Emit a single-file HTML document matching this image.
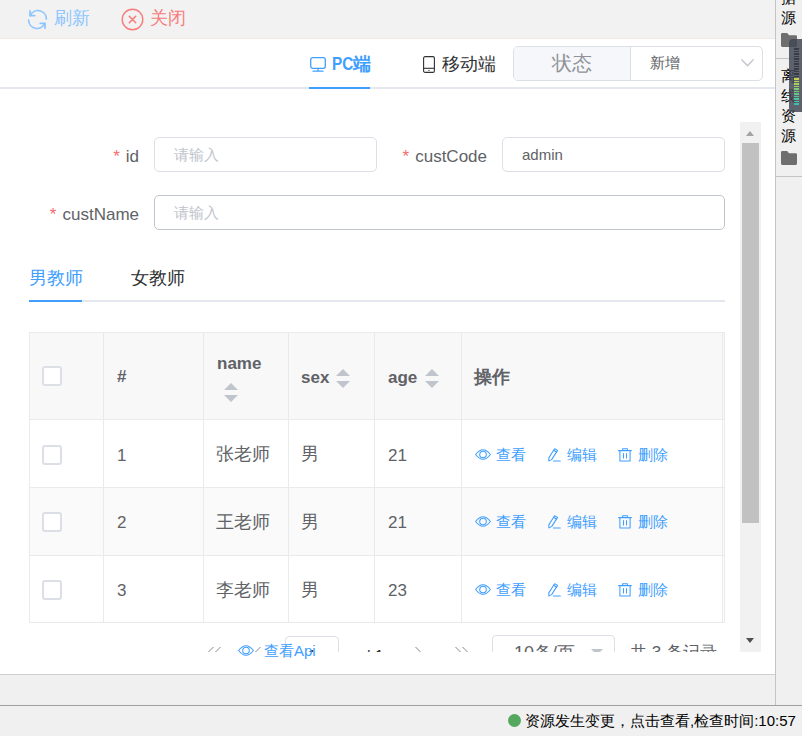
<!DOCTYPE html>
<html lang="zh">
<head>
<meta charset="utf-8">
<title>page</title>
<style>
*{box-sizing:border-box;margin:0;padding:0}
html,body{width:802px;height:736px;overflow:hidden;background:#f0f0f0;font-family:"Liberation Sans",sans-serif;color:#606266}
svg{position:absolute;overflow:visible}
#topbar{position:absolute;left:0;top:0;width:775px;height:39px;background:#f2f2f2;border-bottom:1px solid #f2e8e6}
#topbar .btn{position:absolute;top:0;height:38px;line-height:37px;font-size:18px;white-space:nowrap}
#bar2{position:absolute;left:0;top:39px;width:775px;height:50px;background:#fff;border-bottom:2px solid #e4e7ed}
#main{position:absolute;left:0;top:89px;width:775px;height:585px;background:#fff}
#clip{position:absolute;left:0;top:0;width:740px;height:563px;overflow:hidden}
#gap{position:absolute;left:0;top:674px;width:775px;height:31px;background:#f0f0f0;border-top:1px solid #cfcfcf}
#status{position:absolute;left:0;top:705px;width:802px;height:31px;background:#f0f0f0;border-top:1px solid #a0a0a0}
#side{position:absolute;left:775px;top:0;width:27px;height:705px;background:#f0f0f0;border-left:1px solid #c4c4c4}
.tab2{position:absolute;top:0;height:50px;line-height:51px;font-size:18px;white-space:nowrap}
.lbl{position:absolute;font-size:17px;color:#606266;text-align:right;white-space:nowrap;height:35px;line-height:39px}
.lbl i{color:#f56c6c;font-style:normal;margin-right:6px}
.inp{position:absolute;height:35px;border:1px solid #dcdfe6;border-radius:5px;background:#fff;font-size:15px;line-height:33px;padding-left:19px;color:#606266;white-space:nowrap}
.ph{color:#c0c4cc}
.t{position:absolute;white-space:nowrap}
</style>
</head>
<body>
<div id="topbar">
<svg style="left:27px;top:9px" width="21" height="21" viewBox="0 0 21 21" fill="none" stroke="#8cc5ff" stroke-width="1.7" stroke-linecap="round" stroke-linejoin="round">
<path d="M3.3 6.6A8.4 8.4 0 0 1 19.4 10"/><path d="M3 1.8V6.6H7.8"/>
<path d="M17.7 14.4A8.4 8.4 0 0 1 1.6 11"/><path d="M13.2 14.4H18V19.2"/></svg>
<svg style="left:121px;top:8px" width="23" height="23" viewBox="0 0 23 23" fill="none" stroke="#f97c7c" stroke-width="1.4" stroke-linecap="round">
<circle cx="11.5" cy="11.5" r="10.3"/><path d="M8.3 8.3L14.7 14.7M14.7 8.3L8.3 14.7" stroke-width="1.6"/></svg>
  <div class="btn" style="left:54px;color:#8cc5ff">刷新</div>
  <div class="btn" style="left:150px;color:#f97c7c">关闭</div>
</div>
<div id="bar2">
<svg style="left:310px;top:18px" width="16" height="15" viewBox="0 0 16 15" fill="none" stroke="#409eff" stroke-width="1.3">
<rect x="0.7" y="0.7" width="14.6" height="10.6" rx="2"/><path d="M8 11.3V14M3 14.2H13" stroke-linecap="round" stroke-width="1.2"/></svg>
<svg style="left:423px;top:17px" width="12" height="17" viewBox="0 0 12 17" fill="none" stroke="#303133" stroke-width="1.1">
<rect x="0.6" y="0.6" width="10.8" height="15.8" rx="1.5"/><path d="M0.6 12.3H11.4"/><circle cx="6" cy="14.4" r="0.6" fill="#303133" stroke="none"/></svg>
  <div class="tab2" style="left:331.5px;color:#409eff;font-weight:bold"><span style="display:inline-block;transform:scaleX(0.85);transform-origin:0 50%;margin-right:-3.8px">PC</span>端</div>
  <div class="tab2" style="left:442px;color:#303133">移动端</div>
  <div style="position:absolute;left:309px;top:48px;width:61px;height:2px;background:#409eff"></div>
  <div style="position:absolute;left:513px;top:7px;width:250px;height:35px;border:1px solid #dcdfe6;border-radius:5px;background:#fff;overflow:hidden">
    <div style="position:absolute;left:0;top:0;width:117px;height:33px;background:#f5f7fa;border-right:1px solid #dcdfe6;color:#909399;font-size:20px;line-height:33px;text-align:center">状态</div>
    <div style="position:absolute;left:136px;top:0;height:33px;line-height:32px;font-size:15px;color:#606266">新增</div>
    <svg style="left:227px;top:12px" width="13" height="8" viewBox="0 0 13 8" fill="none" stroke="#c0c4cc" stroke-width="1.3" stroke-linecap="round" stroke-linejoin="round"><path d="M0.8 0.8L6.5 6.8L12.2 0.8"/></svg>
  </div>
</div>
<div id="main">
 <div id="clip">
<div class="lbl" style="left:29px;top:48px;width:110px"><i>*</i>id</div>
<div class="inp" style="left:154px;top:48px;width:223px"><span class="ph">请输入</span></div>
<div class="lbl" style="left:377px;top:48px;width:110px"><i>*</i>custCode</div>
<div class="inp" style="left:502px;top:48px;width:223px">admin</div>
<div class="lbl" style="left:29px;top:106px;width:110px"><i>*</i>custName</div>
<div class="inp" style="left:154px;top:106px;width:571px;border-color:#c0c4cc"><span class="ph">请输入</span></div>
<div class="t" style="left:29px;top:174px;height:30px;line-height:30px;font-size:18px;color:#409eff">男教师</div>
<div class="t" style="left:131px;top:174px;height:30px;line-height:30px;font-size:18px;color:#303133">女教师</div>
<div style="position:absolute;left:29px;top:211px;width:696px;height:2px;background:#e4e7ed"></div>
<div style="position:absolute;left:29px;top:211px;width:53px;height:2px;background:#409eff"></div>
<div id="tbl" style="position:absolute;left:29px;top:243px;width:696px;height:291px;background:#fff">
<div style="position:absolute;left:0;top:0;width:696px;height:87px;background:#f8f8f9"></div>
<div style="position:absolute;left:0;top:155px;width:696px;height:68px;background:#fafafa"></div>
<div style="position:absolute;left:0;top:0px;width:696px;height:1px;background:#e8eaec"></div>
<div style="position:absolute;left:0;top:87px;width:696px;height:1px;background:#e8eaec"></div>
<div style="position:absolute;left:0;top:155px;width:696px;height:1px;background:#e8eaec"></div>
<div style="position:absolute;left:0;top:222.5px;width:696px;height:1px;background:#e8eaec"></div>
<div style="position:absolute;left:0;top:290px;width:696px;height:1px;background:#e8eaec"></div>
<div style="position:absolute;left:0px;top:0;width:1px;height:291px;background:#e8eaec"></div>
<div style="position:absolute;left:74px;top:0;width:1px;height:291px;background:#e8eaec"></div>
<div style="position:absolute;left:174px;top:0;width:1px;height:291px;background:#e8eaec"></div>
<div style="position:absolute;left:259px;top:0;width:1px;height:291px;background:#e8eaec"></div>
<div style="position:absolute;left:345px;top:0;width:1px;height:291px;background:#e8eaec"></div>
<div style="position:absolute;left:432px;top:0;width:1px;height:291px;background:#e8eaec"></div>
<div style="position:absolute;left:693px;top:0;width:1px;height:291px;background:#e8eaec"></div>
<div style="position:absolute;left:695px;top:0;width:1px;height:291px;background:#e8eaec"></div>
<div style="position:absolute;left:13px;top:34.0px;width:20px;height:20px;border:2px solid #dcdfe6;border-radius:3px;background:#fff"></div>
<div style="position:absolute;left:13px;top:112.5px;width:20px;height:20px;border:2px solid #dcdfe6;border-radius:3px;background:#fff"></div>
<div style="position:absolute;left:13px;top:180.0px;width:20px;height:20px;border:2px solid #dcdfe6;border-radius:3px;background:#fff"></div>
<div style="position:absolute;left:13px;top:248.0px;width:20px;height:20px;border:2px solid #dcdfe6;border-radius:3px;background:#fff"></div>
<div class="t" style="left:88px;top:32.5px;height:24px;line-height:24px;font-size:17px;font-weight:bold;color:#606266;">#</div>
<div class="t" style="left:188px;top:19.5px;height:24px;line-height:24px;font-size:17px;font-weight:bold;color:#606266;">name</div>
<div class="t" style="left:272px;top:33.5px;height:24px;line-height:24px;font-size:17px;font-weight:bold;color:#606266;">sex</div>
<div class="t" style="left:359px;top:33.5px;height:24px;line-height:24px;font-size:17px;font-weight:bold;color:#606266;">age</div>
<div class="t" style="left:445px;top:33px;height:24px;line-height:24px;font-size:17px;font-weight:bold;color:#606266;font-size:18px">操作</div>
<div style="position:absolute;left:195px;top:51.0px;width:0;height:0;border-left:7px solid transparent;border-right:7px solid transparent;border-bottom:7px solid #c0c4cc"></div>
<div style="position:absolute;left:195px;top:62.5px;width:0;height:0;border-left:7px solid transparent;border-right:7px solid transparent;border-top:7px solid #c0c4cc"></div>
<div style="position:absolute;left:307px;top:37.0px;width:0;height:0;border-left:7px solid transparent;border-right:7px solid transparent;border-bottom:7px solid #c0c4cc"></div>
<div style="position:absolute;left:307px;top:48.5px;width:0;height:0;border-left:7px solid transparent;border-right:7px solid transparent;border-top:7px solid #c0c4cc"></div>
<div style="position:absolute;left:396px;top:37.0px;width:0;height:0;border-left:7px solid transparent;border-right:7px solid transparent;border-bottom:7px solid #c0c4cc"></div>
<div style="position:absolute;left:396px;top:48.5px;width:0;height:0;border-left:7px solid transparent;border-right:7px solid transparent;border-top:7px solid #c0c4cc"></div>
<div class="t" style="left:88px;top:111.5px;height:24px;line-height:24px;font-size:17px;color:#606266">1</div>
<div class="t" style="left:187px;top:110px;height:24px;line-height:24px;font-size:18px;color:#606266">张老师</div>
<div class="t" style="left:272px;top:110px;height:24px;line-height:24px;font-size:18px;color:#606266">男</div>
<div class="t" style="left:359px;top:111.5px;height:24px;line-height:24px;font-size:17px;color:#606266">21</div>
<div class="t" style="left:467px;top:111px;height:24px;line-height:24px;font-size:15px;color:#409eff">查看</div>
<div class="t" style="left:538px;top:111px;height:24px;line-height:24px;font-size:15px;color:#409eff">编辑</div>
<div class="t" style="left:609px;top:111px;height:24px;line-height:24px;font-size:15px;color:#409eff">删除</div>
<div class="t" style="left:88px;top:179px;height:24px;line-height:24px;font-size:17px;color:#606266">2</div>
<div class="t" style="left:187px;top:177.5px;height:24px;line-height:24px;font-size:18px;color:#606266">王老师</div>
<div class="t" style="left:272px;top:177.5px;height:24px;line-height:24px;font-size:18px;color:#606266">男</div>
<div class="t" style="left:359px;top:179px;height:24px;line-height:24px;font-size:17px;color:#606266">21</div>
<div class="t" style="left:467px;top:178px;height:24px;line-height:24px;font-size:15px;color:#409eff">查看</div>
<div class="t" style="left:538px;top:178px;height:24px;line-height:24px;font-size:15px;color:#409eff">编辑</div>
<div class="t" style="left:609px;top:178px;height:24px;line-height:24px;font-size:15px;color:#409eff">删除</div>
<div class="t" style="left:88px;top:247px;height:24px;line-height:24px;font-size:17px;color:#606266">3</div>
<div class="t" style="left:187px;top:245.5px;height:24px;line-height:24px;font-size:18px;color:#606266">李老师</div>
<div class="t" style="left:272px;top:245.5px;height:24px;line-height:24px;font-size:18px;color:#606266">男</div>
<div class="t" style="left:359px;top:247px;height:24px;line-height:24px;font-size:17px;color:#606266">23</div>
<div class="t" style="left:467px;top:246px;height:24px;line-height:24px;font-size:15px;color:#409eff">查看</div>
<div class="t" style="left:538px;top:246px;height:24px;line-height:24px;font-size:15px;color:#409eff">编辑</div>
<div class="t" style="left:609px;top:246px;height:24px;line-height:24px;font-size:15px;color:#409eff">删除</div>
<svg style="left:446px;top:116.8px" width="16" height="11" viewBox="0 0 16 11" fill="none" stroke="#409eff" stroke-width="1.05"><path d="M0.6 5.5Q8 -4 15.4 5.5Q8 15 0.6 5.5Z" stroke-linejoin="round"/><circle cx="8" cy="5.5" r="3.3"/></svg><svg style="left:518.5px;top:115.5px" width="13" height="14" viewBox="0 0 13 14" fill="none" stroke="#409eff" stroke-width="1.05" stroke-linejoin="round" stroke-linecap="round"><path d="M6.6 0.7L9.6 2.4L3.6 11.6L0.9 12.9L0.8 9.9Z"/><path d="M5.6 2.3L8.5 4M5.5 13H12.3"/></svg><svg style="left:589px;top:115.5px" width="14" height="14" viewBox="0 0 14 14" fill="none" stroke="#409eff" stroke-width="1.05" stroke-linecap="round" stroke-linejoin="round"><path d="M0.6 2.6H13.4M4.6 2.4V0.8H9.4V2.4M1.9 2.8V13H12.1V2.8M5.5 5.5V10M8.5 5.5V10"/></svg><svg style="left:446px;top:184.3px" width="16" height="11" viewBox="0 0 16 11" fill="none" stroke="#409eff" stroke-width="1.05"><path d="M0.6 5.5Q8 -4 15.4 5.5Q8 15 0.6 5.5Z" stroke-linejoin="round"/><circle cx="8" cy="5.5" r="3.3"/></svg><svg style="left:518.5px;top:183.0px" width="13" height="14" viewBox="0 0 13 14" fill="none" stroke="#409eff" stroke-width="1.05" stroke-linejoin="round" stroke-linecap="round"><path d="M6.6 0.7L9.6 2.4L3.6 11.6L0.9 12.9L0.8 9.9Z"/><path d="M5.6 2.3L8.5 4M5.5 13H12.3"/></svg><svg style="left:589px;top:183.0px" width="14" height="14" viewBox="0 0 14 14" fill="none" stroke="#409eff" stroke-width="1.05" stroke-linecap="round" stroke-linejoin="round"><path d="M0.6 2.6H13.4M4.6 2.4V0.8H9.4V2.4M1.9 2.8V13H12.1V2.8M5.5 5.5V10M8.5 5.5V10"/></svg><svg style="left:446px;top:252.3px" width="16" height="11" viewBox="0 0 16 11" fill="none" stroke="#409eff" stroke-width="1.05"><path d="M0.6 5.5Q8 -4 15.4 5.5Q8 15 0.6 5.5Z" stroke-linejoin="round"/><circle cx="8" cy="5.5" r="3.3"/></svg><svg style="left:518.5px;top:251.0px" width="13" height="14" viewBox="0 0 13 14" fill="none" stroke="#409eff" stroke-width="1.05" stroke-linejoin="round" stroke-linecap="round"><path d="M6.6 0.7L9.6 2.4L3.6 11.6L0.9 12.9L0.8 9.9Z"/><path d="M5.6 2.3L8.5 4M5.5 13H12.3"/></svg><svg style="left:589px;top:251.0px" width="14" height="14" viewBox="0 0 14 14" fill="none" stroke="#409eff" stroke-width="1.05" stroke-linecap="round" stroke-linejoin="round"><path d="M0.6 2.6H13.4M4.6 2.4V0.8H9.4V2.4M1.9 2.8V13H12.1V2.8M5.5 5.5V10M8.5 5.5V10"/></svg></div>
<div style="position:absolute;left:285px;top:547px;width:54px;height:34px;border:1px solid #dcdfe6;border-radius:4px;background:#fff"></div>
<div style="position:absolute;left:492px;top:546px;width:123px;height:34px;border:1px solid #dcdfe6;border-radius:4px;background:#fff"></div>
<div class="t" style="left:514px;top:547px;height:34px;line-height:34px;font-size:18px;color:#606266">10条/页</div>
<div class="t" style="left:630px;top:547px;height:34px;line-height:34px;font-size:17px;color:#606266">共 3 条记录</div>
<svg style="left:0;top:557px" width="740" height="20" viewBox="0 0 740 20" fill="none" stroke="#85878b" stroke-width="1" stroke-linecap="butt">
<path d="M206.5 8L213.5 1M213.5 8L220.5 1M253.5 8L260.5 1M415.5 1L422.5 8M455.5 1L462.5 8M462.5 1L469.5 8"/>
<path d="M591 3H603L597 9Z" fill="#c0c4cc" stroke="none"/></svg>
<div class="t" style="left:365px;top:551px;height:34px;line-height:34px;font-size:17px;color:#303133">/ 1</div><div class="t" style="left:285px;top:551px;width:54px;text-align:center;height:34px;line-height:34px;font-size:17px;color:#303133">1</div>
 </div>
<svg style="left:238px;top:556px" width="16" height="11" viewBox="0 0 16 11" fill="none" stroke="#409eff" stroke-width="1.05"><path d="M0.6 5.5Q8 -4 15.4 5.5Q8 15 0.6 5.5Z" stroke-linejoin="round"/><circle cx="8" cy="5.5" r="3.3"/></svg><div class="t" style="left:264px;top:551px;height:22px;line-height:22px;font-size:15px;color:#409eff;background:transparent">查看Api</div>
</div>

<div id="sb" style="position:absolute;left:740px;top:122px;width:21px;height:530px;background:#f1f1f1">
  <div style="position:absolute;left:2px;top:21px;width:17px;height:380px;background:#c1c1c1"></div>
  <div style="position:absolute;left:6px;top:9px;width:0;height:0;border-left:4.5px solid transparent;border-right:4.5px solid transparent;border-bottom:5px solid #a3a3a3"></div>
  <div style="position:absolute;left:6px;top:516px;width:0;height:0;border-left:4.5px solid transparent;border-right:4.5px solid transparent;border-top:5px solid #505050"></div>
</div>
<div id="gap"></div>
<div id="side"><div class="t" style="left:4.5px;top:-12px;width:15px;height:20px;line-height:20px;font-size:15px;color:#000">据</div><div class="t" style="left:4.5px;top:8px;width:15px;height:20px;line-height:20px;font-size:15px;color:#000">源</div><svg style="left:4.5px;top:33px" width="16" height="14" viewBox="0 0 16 14"><path d="M1.2 0H6.2L8 2.2H14.8Q16 2.2 16 3.4V12.6Q16 14 14.8 14H1.2Q0 14 0 12.6V1.2Q0 0 1.2 0Z" fill="#6e6e6e"/></svg><div style="position:absolute;left:0;top:58px;width:27px;height:1px;background:#c4c4c4"></div><div class="t" style="left:4.5px;top:66px;width:15px;height:20px;line-height:20px;font-size:15px;color:#000">离</div><div class="t" style="left:4.5px;top:86px;width:15px;height:20px;line-height:20px;font-size:15px;color:#000">线</div><div class="t" style="left:4.5px;top:106px;width:15px;height:20px;line-height:20px;font-size:15px;color:#000">资</div><div class="t" style="left:4.5px;top:126px;width:15px;height:20px;line-height:20px;font-size:15px;color:#000">源</div><svg style="left:4.5px;top:151px" width="16" height="14" viewBox="0 0 16 14"><path d="M1.2 0H6.2L8 2.2H14.8Q16 2.2 16 3.4V12.6Q16 14 14.8 14H1.2Q0 14 0 12.6V1.2Q0 0 1.2 0Z" fill="#6e6e6e"/></svg><div style="position:absolute;left:0;top:176px;width:27px;height:1px;background:#c4c4c4"></div><div style="position:absolute;left:13px;top:39px;width:14px;height:73px;background:rgba(66,70,84,0.84);border-radius:4px 0 0 4px;overflow:hidden"><div style="position:absolute;left:5px;top:9.2px;width:5.4px;height:1.5px;background:#383b46"></div><div style="position:absolute;left:5px;top:11.7px;width:5.4px;height:1.5px;background:#383b46"></div><div style="position:absolute;left:5px;top:14.2px;width:5.4px;height:1.5px;background:#383b46"></div><div style="position:absolute;left:5px;top:16.7px;width:5.4px;height:1.5px;background:#383b46"></div><div style="position:absolute;left:5px;top:19.2px;width:5.4px;height:1.5px;background:#383b46"></div><div style="position:absolute;left:5px;top:21.7px;width:5.4px;height:1.5px;background:#383b46"></div><div style="position:absolute;left:5px;top:24.2px;width:5.4px;height:1.5px;background:#383b46"></div><div style="position:absolute;left:5px;top:26.7px;width:5.4px;height:1.5px;background:#383b46"></div><div style="position:absolute;left:5px;top:29.2px;width:5.4px;height:1.5px;background:#383b46"></div><div style="position:absolute;left:5px;top:31.7px;width:5.4px;height:1.5px;background:#383b46"></div><div style="position:absolute;left:5px;top:34.2px;width:5.4px;height:1.5px;background:#383b46"></div><div style="position:absolute;left:5px;top:36.7px;width:5.4px;height:1.5px;background:#383b46"></div><div style="position:absolute;left:5px;top:39.2px;width:5.4px;height:1.5px;background:#c9d24e"></div><div style="position:absolute;left:5px;top:41.7px;width:5.4px;height:1.5px;background:#b9d052"></div><div style="position:absolute;left:5px;top:44.2px;width:5.4px;height:1.5px;background:#a6cf5a"></div><div style="position:absolute;left:5px;top:46.7px;width:5.4px;height:1.5px;background:#93cc63"></div><div style="position:absolute;left:5px;top:49.2px;width:5.4px;height:1.5px;background:#82c96d"></div><div style="position:absolute;left:5px;top:51.7px;width:5.4px;height:1.5px;background:#72c779"></div><div style="position:absolute;left:5px;top:54.2px;width:5.4px;height:1.5px;background:#63c585"></div><div style="position:absolute;left:5px;top:56.7px;width:5.4px;height:1.5px;background:#56c391"></div><div style="position:absolute;left:5px;top:59.2px;width:5.4px;height:1.5px;background:#4ac29c"></div><div style="position:absolute;left:5px;top:61.7px;width:5.4px;height:1.5px;background:#42c1a6"></div><div style="position:absolute;left:5px;top:64.2px;width:5.4px;height:1.5px;background:#3cc0ad"></div></div></div></div>
<div id="status">
  <div style="position:absolute;left:508px;top:8px;width:13px;height:13px;border-radius:50%;background:#55a75f"></div>
  <div class="t" style="left:525px;top:0;height:30px;line-height:29px;font-size:15px;color:#000">资源发生变更，点击查看,检查时间:10:57</div>
</div>
</body>
</html>
